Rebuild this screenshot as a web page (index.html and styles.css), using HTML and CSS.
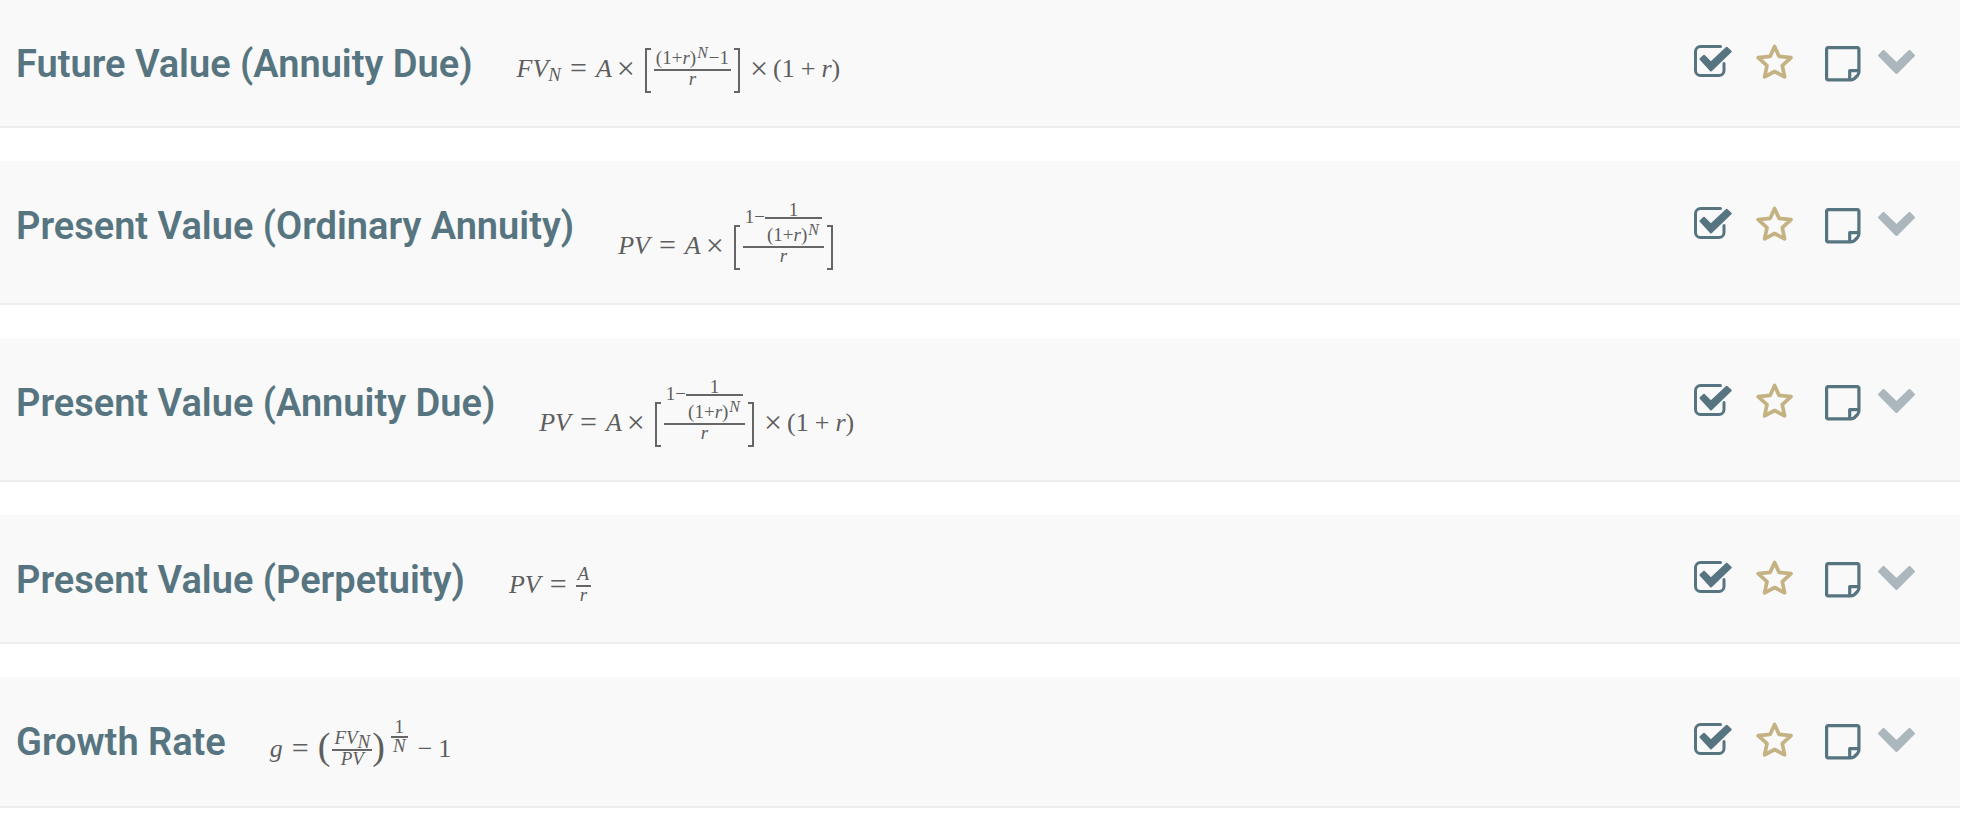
FILE: index.html
```html
<!DOCTYPE html>
<html lang="en">
<head>
<meta charset="utf-8">
<title>Formulas</title>
<link rel="stylesheet" href="styles.css">
</head>
<body>
<svg class="sprite" aria-hidden="true">
  <symbol id="i-check" viewBox="0 0 38 34">
    <path d="M26.500 1.500H6.500a5 5 0 0 0-5 5V25.500a5 5 0 0 0 5 5H25a5 5 0 0 0 5-5V18.500" fill="none" stroke="currentColor" stroke-width="3" stroke-linecap="round"/>
    <path d="M6.500 14L10 10.700L17 17.600L32.700 2.700L36.700 6.500L17 25.500Z" fill="currentColor" stroke="currentColor" stroke-width="2" stroke-linejoin="round"/>
  </symbol>
  <symbol id="i-star" viewBox="0 0 38 38">
    <path d="M18.600 3.500L23 13.300L35 14.700L26.300 22.600L28.600 33.800L18.600 28.500L8.600 33.800L11 22.600L2.200 14.700L14.200 13.300Z" fill="none" stroke="currentColor" stroke-width="3.700" stroke-linejoin="round"/>
  </symbol>
  <symbol id="i-note" viewBox="0 0 36 36">
    <path d="M1.600 3a1.400 1.400 0 0 1 1.400-1.400H32.500a1.400 1.400 0 0 1 1.400 1.400V26Q33.900 28 32.500 29.500L29.500 32.500Q28 33.900 26 33.900H3A1.400 1.400 0 0 1 1.600 32.500Z M24.700 33.500V24.700H33.500" fill="none" stroke="currentColor" stroke-width="3.200" stroke-linejoin="round"/>
  </symbol>
  <symbol id="i-chevron" viewBox="0 0 38 26">
    <path d="M1.200 5.500L5.500 1.200L18.500 13.700L31.500 1.200L35.800 5.500L18.500 22.800Z" fill="currentColor" stroke="currentColor" stroke-width="2.400" stroke-linejoin="round"/>
  </symbol>
</svg>
<main class="list">
  <section class="row">
    <h2 class="title">Future Value (Annuity Due)</h2>
    <div class="formula"><i>FV</i><sub><i>N</i></sub><span class="rel">=</span><i>A</i><span class="times">×</span><span class="bracket"></span><span class="frac"><span class="num">(1+<i>r</i>)<sup><i>N</i></sup>−1</span><span class="den"><i>r</i></span></span><span class="bracket close"></span><span class="times">×</span>(1<span class="op">+</span><i>r</i>)</div>
    <div class="actions">
      <button class="check" aria-label="Mark as done"><svg><use href="#i-check"/></svg></button>
      <button class="star" aria-label="Favourite"><svg><use href="#i-star"/></svg></button>
      <button class="note" aria-label="Add note"><svg><use href="#i-note"/></svg></button>
      <button class="chevron" aria-label="Expand"><svg><use href="#i-chevron"/></svg></button>
    </div>
  </section>
  <section class="row">
    <h2 class="title">Present Value (Ordinary Annuity)</h2>
    <div class="formula"><i>PV</i><span class="rel">=</span><i>A</i><span class="times">×</span><span class="bracket"></span><span class="frac"><span class="num">1−<span class="frac nested"><span class="num">1</span><span class="den">(1+<i>r</i>)<sup><i>N</i></sup></span></span></span><span class="den"><i>r</i></span></span><span class="bracket close"></span></div>
    <div class="actions">
      <button class="check" aria-label="Mark as done"><svg><use href="#i-check"/></svg></button>
      <button class="star" aria-label="Favourite"><svg><use href="#i-star"/></svg></button>
      <button class="note" aria-label="Add note"><svg><use href="#i-note"/></svg></button>
      <button class="chevron" aria-label="Expand"><svg><use href="#i-chevron"/></svg></button>
    </div>
  </section>
  <section class="row">
    <h2 class="title">Present Value (Annuity Due)</h2>
    <div class="formula"><i>PV</i><span class="rel">=</span><i>A</i><span class="times">×</span><span class="bracket"></span><span class="frac"><span class="num">1−<span class="frac nested"><span class="num">1</span><span class="den">(1+<i>r</i>)<sup><i>N</i></sup></span></span></span><span class="den"><i>r</i></span></span><span class="bracket close"></span><span class="times">×</span>(1<span class="op">+</span><i>r</i>)</div>
    <div class="actions">
      <button class="check" aria-label="Mark as done"><svg><use href="#i-check"/></svg></button>
      <button class="star" aria-label="Favourite"><svg><use href="#i-star"/></svg></button>
      <button class="note" aria-label="Add note"><svg><use href="#i-note"/></svg></button>
      <button class="chevron" aria-label="Expand"><svg><use href="#i-chevron"/></svg></button>
    </div>
  </section>
  <section class="row">
    <h2 class="title">Present Value (Perpetuity)</h2>
    <div class="formula"><i>PV</i><span class="rel">=</span><span class="frac"><span class="num"><i>A</i></span><span class="den"><i>r</i></span></span></div>
    <div class="actions">
      <button class="check" aria-label="Mark as done"><svg><use href="#i-check"/></svg></button>
      <button class="star" aria-label="Favourite"><svg><use href="#i-star"/></svg></button>
      <button class="note" aria-label="Add note"><svg><use href="#i-note"/></svg></button>
      <button class="chevron" aria-label="Expand"><svg><use href="#i-chevron"/></svg></button>
    </div>
  </section>
  <section class="row">
    <h2 class="title">Growth Rate</h2>
    <div class="formula"><i>g</i><span class="rel">=</span><span class="paren">(</span><span class="frac"><span class="num"><i>FV</i><sub><i>N</i></sub></span><span class="den"><i>PV</i></span></span><span class="paren">)</span><span class="frac power"><span class="num">1</span><span class="den"><i>N</i></span></span><span class="op minus">−</span>1</div>
    <div class="actions">
      <button class="check" aria-label="Mark as done"><svg><use href="#i-check"/></svg></button>
      <button class="star" aria-label="Favourite"><svg><use href="#i-star"/></svg></button>
      <button class="note" aria-label="Add note"><svg><use href="#i-note"/></svg></button>
      <button class="chevron" aria-label="Expand"><svg><use href="#i-chevron"/></svg></button>
    </div>
  </section>
</main>
</body>
</html>
```
FILE: styles.css
```css
body {
  margin: 0;
  background: #fff;
}

.sprite {
  display: none;
}

.list {
  display: flex;
  flex-direction: column;
  gap: 33px;
  margin: -1px 10px 0 0;
}

.row {
  display: flex;
  align-items: flex-start;
  padding: 43px 44px 30px 16px;
  background: #f9f9f9;
  border-bottom: 2px solid #ededed;
}

.title {
  margin: 0;
  color: #577580;
  font: 600 38px/44px Roboto, sans-serif;
}

.formula {
  margin-left: 44px;
  color: #5e5e5e;
  font: 26px/54px "Liberation Serif", serif;
  white-space: nowrap;
}

.rel {
  margin: 0 9px;
  font-size: 30px;
  line-height: 0;
  vertical-align: -1px;
}

.times {
  margin: 0 5px;
  font-size: 32px;
  line-height: 0;
  vertical-align: -2px;
}

.op {
  margin: 0 6px;
}

.op.minus {
  margin-left: 10px;
}

.formula sub,
.formula sup {
  font-size: 19px;
  line-height: 0;
}

.formula sub {
  vertical-align: -4px;
}

.formula sup {
  margin: 0 1px;
  font-size: 16px;
  vertical-align: 6px;
}

.bracket {
  display: inline-block;
  box-sizing: border-box;
  width: 6px;
  height: 45px;
  margin: 0 3px 0 5px;
  border: 2px solid #666;
  border-right: 0;
  vertical-align: -16px;
}

.bracket.close {
  margin: 0 5px 0 3px;
  border-right: 2px solid #666;
  border-left: 0;
}

.frac {
  display: inline-block;
  font-size: 19px;
  line-height: 14px;
  text-align: center;
  vertical-align: -8px;
}

.num,
.den {
  display: block;
  padding: 0 2px;
}

.num {
  padding-bottom: 4px;
}

.den {
  padding-top: 1px;
  border-top: 2px solid #666;
}

.nested {
  vertical-align: -18px;
}

.nested .num {
  padding-bottom: 1px;
  line-height: 12px;
}

.nested .den {
  padding-top: 9px;
}

.power {
  margin-left: 4px;
  vertical-align: 5px;
}

.power .num {
  padding-bottom: 2px;
}

.paren {
  margin-right: 2px;
  font-size: 38px;
  line-height: 0;
  vertical-align: -2px;
}

.actions {
  display: flex;
  align-items: flex-start;
  margin-left: auto;
}

.actions button {
  display: block;
  padding: 0;
  border: 0;
  background: none;
  color: #577580;
  cursor: pointer;
}

.actions svg {
  display: block;
  width: 38px;
  height: 38px;
}

.actions .check svg {
  height: 34px;
  margin-top: 3px;
}

.actions .star {
  margin-left: 24px;
  color: #c5b283;
}

.actions .star svg {
  margin-top: 1px;
}

.actions .note {
  margin-left: 31px;
}

.actions .note svg {
  width: 36px;
  height: 36px;
  margin-top: 4px;
}

.actions .chevron {
  margin-left: 17px;
  color: #abb7bd;
}

.actions .chevron svg {
  height: 26px;
  margin-top: 8px;
}
```
